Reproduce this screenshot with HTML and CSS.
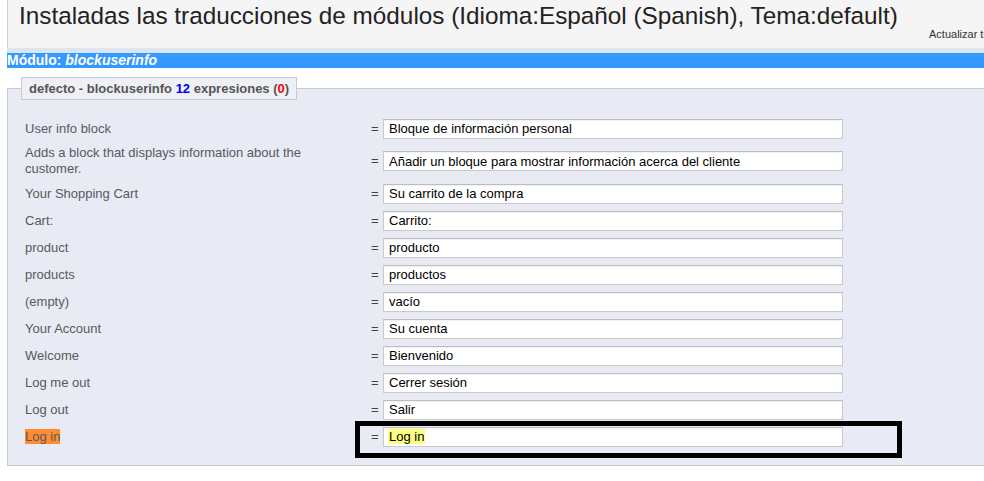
FILE: index.html
```html
<!DOCTYPE html>
<html lang="es">
<head>
<meta charset="utf-8">
<title>Traducciones de módulos</title>
<link rel="stylesheet" href="styles.css">
</head>
<body>
<div class="page">
  <div class="header">
    <h2 class="title">Instaladas las traducciones de módulos (Idioma:Español (Spanish), Tema:default)</h2>
    <a class="update" href="#">Actualizar traducciones</a>
  </div>
  <div class="module-bar">Módulo: <em>blockuserinfo</em></div>
  <fieldset class="box">
    <legend class="box-legend">defecto - blockuserinfo <span class="count">12</span> expresiones (<span class="missing">0</span>)</legend>
    <div class="row"><div class="label">User info block</div><span class="eq">=</span><input class="field" type="text" value="Bloque de información personal"></div>
    <div class="row"><div class="label">Adds a block that displays information about the customer.</div><span class="eq">=</span><input class="field" type="text" value="Añadir un bloque para mostrar información acerca del cliente"></div>
    <div class="row"><div class="label">Your Shopping Cart</div><span class="eq">=</span><input class="field" type="text" value="Su carrito de la compra"></div>
    <div class="row"><div class="label">Cart:</div><span class="eq">=</span><input class="field" type="text" value="Carrito:"></div>
    <div class="row"><div class="label">product</div><span class="eq">=</span><input class="field" type="text" value="producto"></div>
    <div class="row"><div class="label">products</div><span class="eq">=</span><input class="field" type="text" value="productos"></div>
    <div class="row"><div class="label">(empty)</div><span class="eq">=</span><input class="field" type="text" value="vacío"></div>
    <div class="row"><div class="label">Your Account</div><span class="eq">=</span><input class="field" type="text" value="Su cuenta"></div>
    <div class="row"><div class="label">Welcome</div><span class="eq">=</span><input class="field" type="text" value="Bienvenido"></div>
    <div class="row"><div class="label">Log me out</div><span class="eq">=</span><input class="field" type="text" value="Cerrer sesión"></div>
    <div class="row"><div class="label">Log out</div><span class="eq">=</span><input class="field" type="text" value="Salir"></div>
    <div class="row row-marked">
      <div class="label"><span class="hl-orange">Log in</span></div><span class="eq">=</span><div class="field"><span class="hl-yellow">Log in</span></div>
      <div class="annotation"></div>
    </div>
  </fieldset>
</div>
</body>
</html>
```
FILE: styles.css
```css
html, body {
  margin: 0;
  padding: 0;
  overflow: hidden;
  background: #ffffff;
}
body {
  font-family: "Liberation Sans", Arial, sans-serif;
  width: 984px;
  height: 481px;
}
.page {
  width: 1200px;
}
.header {
  margin-left: 7px;
  height: 48px;
  background: #f5f5f5;
  border-left: 1px solid #cfcfcf;
  display: flex;
  align-items: flex-start;
  white-space: nowrap;
  overflow: hidden;
}
.title {
  flex: 0 0 910px;
  margin: 0;
  padding: 2px 0 0 11px;
  box-sizing: border-box;
  font-size: 24.3px;
  line-height: 28px;
  font-weight: normal;
  color: #222222;
}
.update {
  margin: 27px 0 0 11px;
  font-size: 11px;
  line-height: 14px;
  color: #333333;
  text-decoration: none;
}
.module-bar {
  margin-left: 7px;
  border-top: 5px solid #dde6f0;
  background: #3399ff;
  height: 15px;
  line-height: 15px;
  color: #ffffff;
  font-weight: bold;
  font-size: 14px;
  white-space: nowrap;
}
.module-bar em {
  font-style: italic;
}
.box {
  margin: 9px 0 0 7px;
  padding: 15px 0 15px 17px;
  width: 1100px;
  box-sizing: border-box;
  border: 1px solid #c6c9d1;
  border-right: none;
  background: #e8ebf3;
  min-inline-size: 0;
}
.box-legend {
  margin-left: -4px;
  padding: 0 7px;
  height: 23px;
  box-sizing: border-box;
  line-height: 21px;
  border: 1px solid #c6c9d1;
  background: #eef0f5;
  font-size: 13px;
  font-weight: bold;
  color: #555555;
}
.count {
  color: #0000ee;
}
.missing {
  color: #ff0000;
}
.row {
  display: flex;
  align-items: center;
  min-height: 27px;
  padding: 3px 0;
  box-sizing: border-box;
  position: relative;
}
.label {
  flex: 0 0 346px;
  box-sizing: border-box;
  padding-right: 26px;
  font-size: 13px;
  line-height: 16px;
  color: #575960;
}
.eq {
  flex: 0 0 12px;
  font-size: 13px;
  line-height: 16px;
  color: #444444;
}
.field {
  width: 460px;
  height: 20px;
  box-sizing: border-box;
  margin: 0;
  padding: 0 5px;
  border: 1px solid #c9c9c9;
  border-top-color: #bdbdbd;
  box-shadow: inset 0 1px 1px rgba(0, 0, 0, 0.06);
  background: #ffffff;
  font-family: "Liberation Sans", Arial, sans-serif;
  font-size: 13px;
  line-height: 18px;
  color: #000000;
  outline: none;
}
div.field {
  display: flex;
  align-items: center;
  padding-left: 4px;
}
.hl-orange {
  background: #ff8c2e;
}
.hl-yellow {
  background: #ffff80;
  padding: 0 1px;
  line-height: 15px;
}
.annotation {
  position: absolute;
  left: 330px;
  top: -2px;
  width: 547px;
  height: 37px;
  box-sizing: border-box;
  border: 5px solid #000000;
  pointer-events: none;
}
```
